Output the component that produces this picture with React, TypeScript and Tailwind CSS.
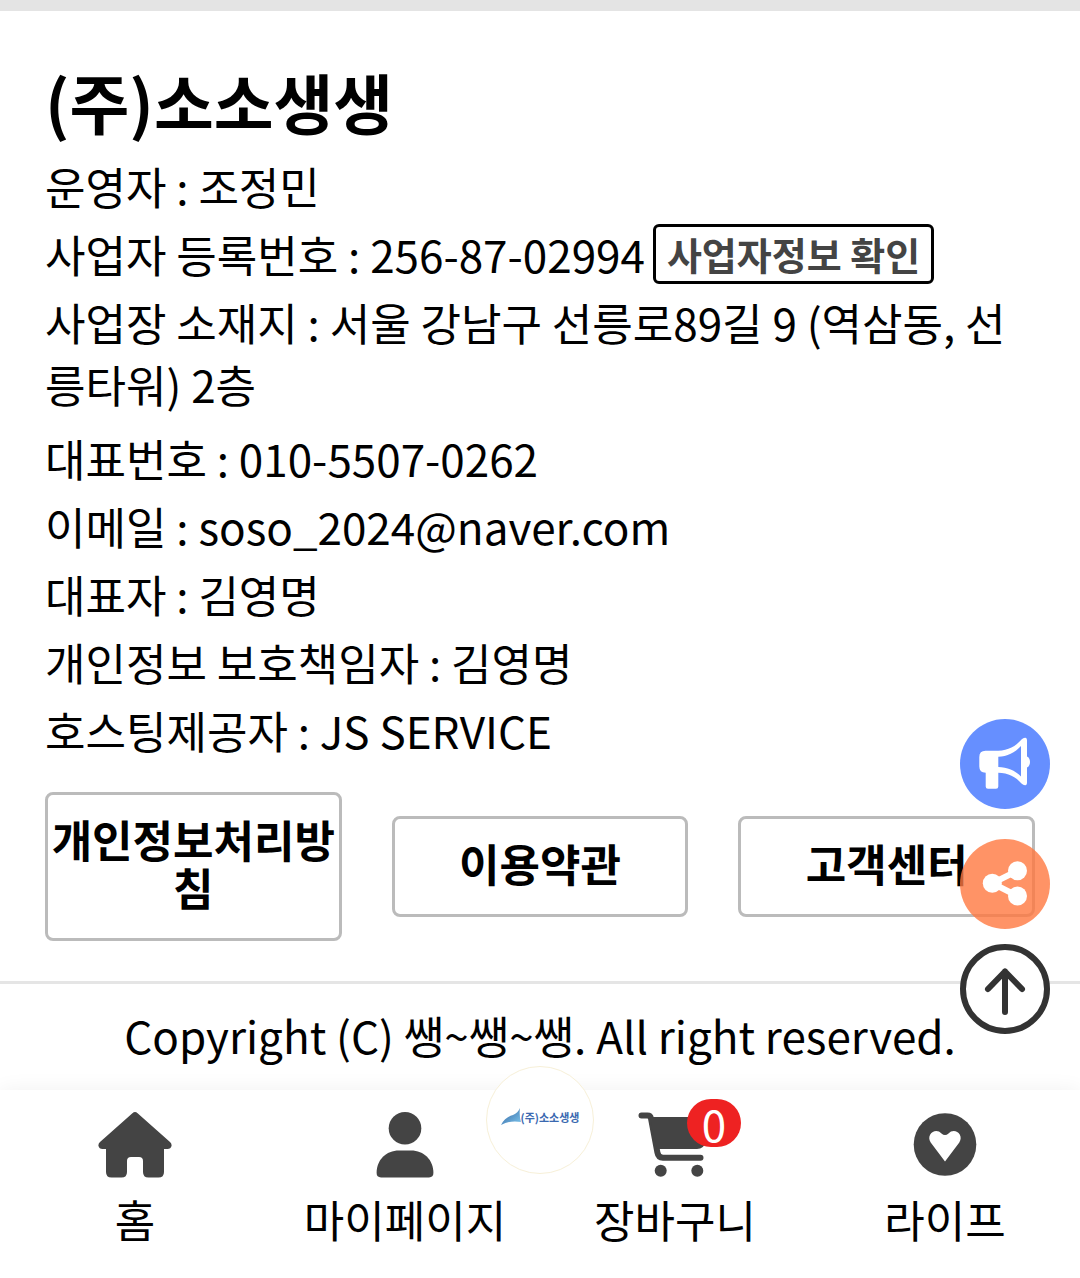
/**
 * Shop footer
 * Company details, policy links, quick buttons and the bottom tab bar
 */

import type { ReactNode } from 'react';

interface InfoRow {
  label: string;
  value: string;
  action?: string;
}

interface TabItem {
  label: string;
  icon: ReactNode;
  count?: number;
}

const HomeIcon = () => (
  <svg viewBox="0 0 74 66" className="h-[66px] w-[74px] fill-[#444]">
    <path d="M34.4 1.2Q37 -1 39.6 1.2L72 30Q74 32 73.5 34Q72.8 37 69.5 37H66V60Q66 65.5 60.5 65.5H50.5Q45 65.5 45 60V49Q45 45 41 45H33Q29 45 29 49V60Q29 65.5 23.5 65.5H13.5Q8 65.5 8 60V37H4.5Q1.2 37 .5 34Q0 32 2 30Z" />
  </svg>
);

const PersonIcon = () => (
  <svg viewBox="0 0 74 66" className="h-[66px] w-[74px] fill-[#444]">
    <circle cx="37" cy="16.3" r="16.3" />
    <path d="M31 38.6H43C56 38.6 65.4 48 65.4 61Q65.4 65.4 61 65.4H13Q8.6 65.4 8.6 61C8.6 48 18 38.6 31 38.6Z" />
  </svg>
);

const CartIcon = () => (
  <svg viewBox="0 0 74 66" className="h-[66px] w-[74px] fill-[#444]">
    <path
      d="M3.5 3.5H9.5Q12.4 3.5 13 6.5L19.4 40.5Q20.3 45.8 25 45.8H62.5"
      fill="none"
      stroke="#444"
      strokeWidth="6"
      strokeLinecap="round"
      strokeLinejoin="round"
    />
    <path d="M12 5H68Q73 5 72 10L67.5 30Q66 37 59 37H19Z" />
    <circle cx="22.7" cy="58.7" r="6" />
    <circle cx="59.3" cy="58.7" r="6" />
  </svg>
);

const HeartIcon = () => (
  <svg viewBox="0 0 74 66" className="h-[66px] w-[74px] fill-[#444]">
    <circle cx="37" cy="32.5" r="31.3" />
    <path
      d="M37 49.5L22.7 30.5C17.5 22 28 15 33.5 21.5Q37 24.5 40.5 21.5C46 15 56.5 22 51.3 30.5Z"
      fill="#fff"
    />
  </svg>
);

const MegaphoneIcon = () => (
  <svg viewBox="0 0 90 90" className="size-full">
    <path
      fill="#fff"
      fillRule="evenodd"
      d="M25.5 31.7H38.3C48 31.7 56 27 61.5 20.5Q63.5 18.5 65.5 18.8Q67 19 67 21V37.5C71 39 71 47 67 48.5V64Q67 66 65.5 66.2Q63.5 66.5 61.500 64.5C56 58 48 53.7 38.3 53.7V67.5Q38.3 69.7 36 69.7H28Q25.7 69.7 25.7 67.5V53.7Q19.3 53.7 19.3 47.5V38Q19.3 31.7 25.5 31.7ZM38.3 37.7V48C47 48 55 51.5 61 57.5V27C55 33.5 47 37.7 38.3 37.7Z"
    />
  </svg>
);

const ShareIcon = () => (
  <svg viewBox="0 0 90 90" className="size-full fill-white">
    <path d="M57.5 31.7L32.3 44.3L57.5 57" fill="none" stroke="#fff" strokeWidth="6" />
    <circle cx="32.3" cy="44.3" r="9.5" />
    <circle cx="57.5" cy="31.7" r="9.5" />
    <circle cx="57.5" cy="57" r="9.5" />
  </svg>
);

const ArrowUpIcon = () => (
  <svg viewBox="0 0 90 90" className="size-full">
    <circle cx="45" cy="45" r="42" fill="#fff" stroke="#333" strokeWidth="6" />
    <path
      d="M45 68V27.5M28 45L45 27.5L62 45"
      fill="none"
      stroke="#333"
      strokeWidth="6"
      strokeLinecap="round"
      strokeLinejoin="round"
    />
  </svg>
);

const WingIcon = () => (
  <svg viewBox="0 0 20 18" className="h-[18px] w-5">
    <defs>
      <linearGradient id="wing" x1="0" y1="0" x2="1" y2="1">
        <stop offset="0" stopColor="#2f5f9e" />
        <stop offset="1" stopColor="#7fc8ee" />
      </linearGradient>
    </defs>
    <path d="M0 17C3 11 8 8 12 7Q17 5 19 0Q18 8 20 14Q9 12 0 17Z" fill="url(#wing)" />
  </svg>
);

const infoRows: InfoRow[] = [
  { label: '운영자', value: '조정민' },
  { label: '사업자 등록번호', value: '256-87-02994', action: '사업자정보 확인' },
  { label: '사업장 소재지', value: '서울 강남구 선릉로89길 9 (역삼동, 선릉타워) 2층' },
  { label: '대표번호', value: '010-5507-0262' },
  { label: '이메일', value: 'soso_2024@naver.com' },
  { label: '대표자', value: '김영명' },
  { label: '개인정보 보호책임자', value: '김영명' },
  { label: '호스팅제공자', value: 'JS SERVICE' },
];

const policyLinks = ['개인정보처리방침', '이용약관', '고객센터'];

const tabs: TabItem[] = [
  { label: '홈', icon: <HomeIcon /> },
  { label: '마이페이지', icon: <PersonIcon /> },
  { label: '장바구니', icon: <CartIcon />, count: 0 },
  { label: '라이프', icon: <HeartIcon /> },
];

const CompanyInfo = () => (
  <section className="px-[45px] pt-[42px]">
    <h2 className="mb-1.5 text-[65px] leading-[96px] font-bold">(주)소소생생</h2>
    <ul>
      {infoRows.map((row) => (
        <li
          key={row.label}
          className="flex items-center gap-2 pb-1.5 leading-[62px] last:pb-0 nth-3:pb-3"
        >
          <span>{`${row.label} : ${row.value}`}</span>
          {row.action && (
            <button
              type="button"
              className="rounded-md border-3 border-black px-[11px] text-[38px] leading-[54px] font-bold text-[#444]"
            >
              {row.action}
            </button>
          )}
        </li>
      ))}
    </ul>
  </section>
);

const PolicyLinks = () => (
  <div className="grid grid-cols-3 items-center gap-[50px] px-[45px] pt-[31px] pb-10">
    {policyLinks.map((label) => (
      <a
        key={label}
        href="#"
        className="rounded-lg border-3 border-[#bbb] pt-5 pb-[27px] text-center leading-[48px] font-bold"
      >
        {label}
      </a>
    ))}
  </div>
);

const QuickButtons = () => (
  <div className="fixed right-[30px] bottom-[244px] z-20 flex flex-col">
    <button type="button" aria-label="공지" className="mb-[30px] size-[90px] rounded-full bg-[#4074ff] opacity-80">
      <MegaphoneIcon />
    </button>
    <button type="button" aria-label="공유" className="mb-[15px] size-[90px] rounded-full bg-[#ff7940] opacity-80">
      <ShareIcon />
    </button>
    <button type="button" aria-label="맨 위로" className="size-[90px] rounded-full">
      <ArrowUpIcon />
    </button>
  </div>
);

const TabBar = () => (
  <nav className="relative bg-white pt-[22px] pb-7 shadow-[0_0_20px_rgba(0,0,0,0.06)]">
    <div className="grid grid-cols-4">
      {tabs.map((tab) => (
        <a key={tab.label} href="#" className="flex flex-col items-center gap-2.5">
          <span className="relative">
            {tab.icon}
            {tab.count !== undefined && (
              <span className="absolute -top-[13px] left-[49px] flex h-12 w-[54px] items-center justify-center rounded-full bg-[#ee2222] text-white">
                {tab.count}
              </span>
            )}
          </span>
          <span className="leading-[62px]">{tab.label}</span>
        </a>
      ))}
    </div>

    {/* Round shop logo over the bar */}
    <a
      href="#"
      className="absolute -top-6 left-1/2 flex size-[108px] -translate-x-1/2 items-center justify-center rounded-full border border-[#f7f0d8] bg-white pb-1.5"
    >
      <WingIcon />
      <span className="text-[11px] leading-[18px] font-bold text-[#3a68b0]">(주)소소생생</span>
    </a>
  </nav>
);

export default function App() {
  return (
    <div className="flex min-h-screen flex-col bg-white font-['Noto_Sans_CJK_KR',sans-serif] text-[44px] text-black">
      <div className="h-[11px] bg-[#e4e4e4]" />
      <footer className="flex-1">
        <CompanyInfo />
        <PolicyLinks />
        <p className="border-t-3 border-[#e5e5e5] pt-5 pb-4 text-center leading-[62px]">
          Copyright (C) 쌩~쌩~쌩. All right reserved.
        </p>
      </footer>
      <TabBar />
      <QuickButtons />
    </div>
  );
}
